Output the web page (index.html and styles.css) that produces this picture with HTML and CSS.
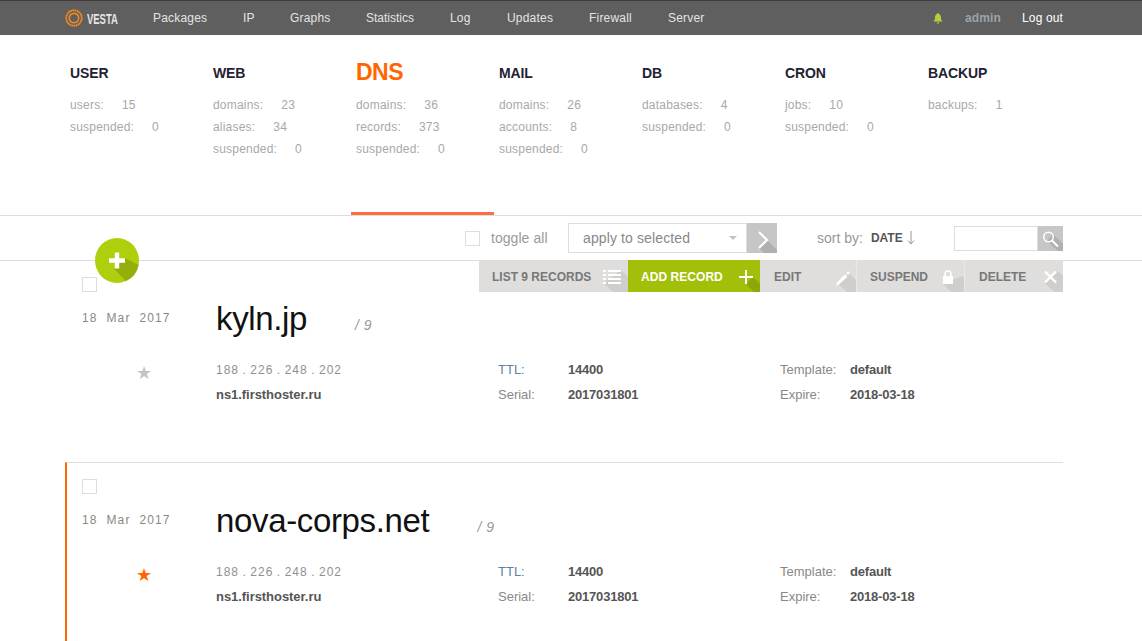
FILE: index.html
```html
<!DOCTYPE html>
<html lang="en">
<head>
<meta charset="utf-8">
<title>Vesta - DNS</title>
<link rel="stylesheet" href="styles.css">
</head>
<body>
<header class="topbar">
  <div class="logo">
    <svg width="18" height="18" viewBox="0 0 20 20"><circle cx="10" cy="10" r="8.600" fill="none" stroke="#f58a1f" stroke-width="2" stroke-dasharray="2 .4"/><circle cx="10" cy="10" r="5.200" fill="none" stroke="#f58a1f" stroke-width="1.800"/></svg>
    <span class="logo-text">VESTA</span>
  </div>
  <nav class="menu">
    <a class="m1">Packages</a><a class="m2">IP</a><a class="m3">Graphs</a><a class="m4">Statistics</a><a class="m5">Log</a><a class="m6">Updates</a><a class="m7">Firewall</a><a class="m8">Server</a>
  </nav>
  <div class="userbox">
    <svg class="bell" width="10" height="11" viewBox="0 0 10 11"><path d="M5 0c.6 0 .9.4.9 1C7.500 1.500 8 3 8 4.500 8 6.800 8.800 7.600 9.600 8.600H.4C1.200 7.600 2 6.800 2 4.500 2 3 2.500 1.500 4.100 1 4.100.4 4.400 0 5 0zM3.700 9.300h2.600C6.200 10.200 5.700 10.700 5 10.700S3.800 10.200 3.700 9.300z" fill="#b5cf3c"/></svg>
    <a class="admin">admin</a>
    <a class="logout">Log out</a>
  </div>
</header>

<section class="tabs">
  <div class="tab"><h3>USER</h3><p><span>users:</span><b>15</b></p><p><span>suspended:</span><b>0</b></p></div>
  <div class="tab"><h3>WEB</h3><p><span>domains:</span><b>23</b></p><p><span>aliases:</span><b>34</b></p><p><span>suspended:</span><b>0</b></p></div>
  <div class="tab active"><h3>DNS</h3><p><span>domains:</span><b>36</b></p><p><span>records:</span><b>373</b></p><p><span>suspended:</span><b>0</b></p></div>
  <div class="tab"><h3>MAIL</h3><p><span>domains:</span><b>26</b></p><p><span>accounts:</span><b>8</b></p><p><span>suspended:</span><b>0</b></p></div>
  <div class="tab"><h3>DB</h3><p><span>databases:</span><b>4</b></p><p><span>suspended:</span><b>0</b></p></div>
  <div class="tab"><h3>CRON</h3><p><span>jobs:</span><b>10</b></p><p><span>suspended:</span><b>0</b></p></div>
  <div class="tab"><h3>BACKUP</h3><p><span>backups:</span><b>1</b></p></div>
</section>

<section class="toolbar">
  <a class="fab">
    <svg width="44" height="45" viewBox="0 0 44 45"><ellipse cx="22" cy="22.500" rx="22" ry="22.500" fill="#aecf0c"/><path d="M30 20L43.600 27A22 22 0 0 1 31 43L19 31z" fill="#96ad0a"/><path d="M19.800 14.500h4.400v5.800H30v4.400h-5.800v5.800h-4.400v-5.800H14v-4.400h5.800z" fill="#fff"/></svg>
  </a>
  <label class="check"></label>
  <span class="toggle">toggle all</span>
  <div class="select"><span>apply to selected</span><i class="caret"></i></div>
  <a class="go">
    <svg width="30" height="30" viewBox="0 0 30 30"><path d="M20 17l10 10v3H17l-5-5z" fill="#b0b0b0"/><path d="M12 9l8 8-8 8" fill="none" stroke="#fff" stroke-width="2.200"/></svg>
  </a>
  <span class="sort">sort by:</span>
  <b class="sort-val">DATE</b>
  <svg class="sort-arrow" width="8" height="14" viewBox="0 0 8 14"><path d="M4 0v13M1 9.500L4 13l3-3.500" fill="none" stroke="#999" stroke-width="1"/></svg>
  <div class="search"></div>
  <a class="search-btn">
    <svg width="25" height="25" viewBox="0 0 25 25"><path d="M15 8l10 10v7h-5L9 15z" fill="#b0b0b0"/><circle cx="10.500" cy="11" r="4.800" fill="none" stroke="#fff" stroke-width="1.500"/><path d="M14 14.500l6 6" stroke="#fff" stroke-width="2"/></svg>
  </a>
</section>

<main class="rows">
  <article class="row">
    <div class="actions">
      <a class="act a-list"><span>LIST 9 RECORDS</span>
        <svg width="32" height="32" viewBox="0 0 32 32"><path d="M25 10l7 7v15H17l-10-9z" fill="#cfcecd"/><path d="M7 10h3v2H7zM12 10h13v2H12zM7 14h3v2H7zM12 14h13v2H12zM7 18h3v2H7zM12 18h13v2H12zM7 22h3v2H7zM12 22h13v2H12z" fill="#fff"/></svg></a>
      <a class="act a-add"><span>ADD RECORD</span>
        <svg width="34" height="32" viewBox="0 0 34 32"><path d="M27 17l7 7v8h-6l-8-8z" fill="#8ba70a"/><path d="M20 10v14M13 17h14" stroke="#fff" stroke-width="2"/></svg></a>
      <a class="act a-edit"><span>EDIT</span>
        <svg width="30" height="32" viewBox="0 0 30 32"><path d="M21 11l9 9v12H21l-10-9z" fill="#cfcecd"/><path d="M11 22.500l8-8.500 2.500 2.500-8.500 8-3 .5zM20 13l2-2 2 2-2 2z" fill="#fff"/></svg></a>
      <a class="act a-susp"><span>SUSPEND</span>
        <svg width="30" height="32" viewBox="0 0 30 32"><path d="M28 16l2 2v14H17l-8-8z" fill="#cfcecd"/><path d="M9 16h10v8H9z" fill="#fff"/><path d="M11 17v-3a3 3 0 0 1 6 0v3" fill="none" stroke="#fff" stroke-width="1.600"/></svg></a>
      <a class="act a-del"><span>DELETE</span>
        <svg width="28" height="32" viewBox="0 0 28 32"><path d="M23 11l5 5v16h-8l-11-9z" fill="#cfcecd"/><path d="M10 11.500l11 11M21 11.500l-11 11" stroke="#fff" stroke-width="2.400"/></svg></a>
    </div>
    <div class="row-side">
      <label class="check"></label>
      <time>18 &nbsp;Mar &nbsp;2017</time>
      <span class="star">★</span>
    </div>
    <div class="row-main">
      <h2><span>kyln.jp</span><em class="c1">/ 9</em></h2>
      <div class="grid">
        <div class="info"><p class="ip">188 . 226 . 248 . 202</p><p class="ns">ns1.firsthoster.ru</p></div>
        <div class="kv"><p><span class="ttl">TTL:</span><b>14400</b></p><p><span>Serial:</span><b>2017031801</b></p></div>
        <div class="kv"><p><span>Template:</span><b>default</b></p><p><span>Expire:</span><b>2018-03-18</b></p></div>
      </div>
    </div>
  </article>

  <article class="row selected">
    <div class="row-side">
      <label class="check"></label>
      <time>18 &nbsp;Mar &nbsp;2017</time>
      <span class="star">★</span>
    </div>
    <div class="row-main">
      <h2><span>nova-corps.net</span><em class="c2">/ 9</em></h2>
      <div class="grid">
        <div class="info"><p class="ip">188 . 226 . 248 . 202</p><p class="ns">ns1.firsthoster.ru</p></div>
        <div class="kv"><p><span class="ttl">TTL:</span><b>14400</b></p><p><span>Serial:</span><b>2017031801</b></p></div>
        <div class="kv"><p><span>Template:</span><b>default</b></p><p><span>Expire:</span><b>2018-03-18</b></p></div>
      </div>
    </div>
  </article>
</main>
</body>
</html>
```
FILE: styles.css
```css
* { box-sizing: border-box; }
html, body { margin: 0; padding: 0; height: 641px; overflow: hidden; background: #fff; }
body { font-family: "Liberation Sans", Arial, sans-serif; color: #555; }
h2, h3, p { margin: 0; font-weight: normal; }
a { display: block; }

.topbar {
  height: 35px;
  background: #5f5f5f;
  border-top: 1px solid #3f3f3f;
  display: flex;
  align-items: center;
  padding-left: 65px;
  font-size: 12px;
}
.logo { display: flex; align-items: center; width: 88px; gap: 4px; }
.logo-text {
  font-size: 15px;
  font-weight: bold;
  color: #e6e6e6;
  transform: scaleX(.63);
  transform-origin: left center;
}
.menu { display: flex; color: #e4e4e4; letter-spacing: .2px; }
.m1 { width: 90px; }
.m2 { width: 47px; }
.m3 { width: 76px; }
.m4 { width: 84px; letter-spacing: 0; }
.m5 { width: 57px; }
.m6 { width: 82px; }
.m7 { width: 79px; }
.userbox { margin-left: auto; display: flex; align-items: center; width: 139px; margin-right: 70px; }
.bell { margin-right: 22px; }
.admin { font-weight: bold; color: #9aa3a8; width: 57px; letter-spacing: .1px; }
.logout { color: #fff; letter-spacing: .15px; white-space: nowrap; }

.tabs {
  height: 180px;
  padding-left: 65px;
  display: flex;
}
.tab { width: 143px; padding: 30px 0 0 5px; position: relative; font-size: 12px; color: #a8a8a8; }
.tab h3 { font-size: 14px; font-weight: bold; color: #1f2233; height: 16px; line-height: 16px; margin-bottom: 16px; letter-spacing: -.1px; }
.tab p { height: 22px; line-height: 17px; display: flex; letter-spacing: .2px; }
.tab p b { font-weight: normal; margin-left: 18px; }
.tab.active::after { content: ""; position: absolute; left: 0; right: 0; bottom: 0; height: 3px; background: #ff6e42; }
.tab.active h3 { color: #ff6600; font-size: 23px; line-height: 14px; letter-spacing: -.5px; }

.toolbar {
  height: 46px;
  border-top: 1px solid #ddd;
  border-bottom: 1px solid #ddd;
  display: flex;
  align-items: center;
  position: relative;
  padding-left: 465px;
}
.check { display: block; width: 15px; height: 15px; border: 1px solid #ddd; background: #fff; flex: none; }
.fab { position: absolute; left: 95px; top: 22px; width: 44px; height: 45px; z-index: 5; }
.fab svg { display: block; }
.toggle { margin-left: 11px; font-size: 14px; color: #999; width: 77px; letter-spacing: .05px; }
.select {
  width: 179px;
  height: 30px;
  border: 1px solid #ddd;
  display: flex;
  align-items: center;
  justify-content: space-between;
  padding: 0 9px 0 14px;
  font-size: 14px;
  color: #888;
  letter-spacing: .12px;
}
.caret { width: 0; height: 0; border: 4px solid transparent; border-top: 4px solid #c4c4c4; border-bottom: 0; }
.go { width: 30px; height: 30px; background: #c6c6c6; overflow: hidden; }
.go svg, .search-btn svg { display: block; }
.sort { margin-left: 40px; font-size: 14px; color: #999; }
.sort-val { margin-left: 8px; font-size: 12px; color: #555; }
.sort-arrow { margin-left: 4px; }
.search { margin-left: 39px; width: 84px; height: 25px; border: 1px solid #ddd; }
.search-btn { width: 25px; height: 25px; background: #c6c6c6; overflow: hidden; }

.rows { padding-left: 65px; width: 1063px; }
.row {
  position: relative;
  height: 201px;
  padding: 16px 0 0 17px;
  display: flex;
}
.row.selected {
  border-top: 1px solid #ddd;
  border-left: 2px solid #ff6600;
  padding-left: 15px;
  height: 190px;
}
.row-side { width: 134px; display: flex; flex-direction: column; position: relative; }
.row-side time { margin-top: 18px; font-size: 12px; letter-spacing: 1.12px; color: #8a8a80; line-height: 16px; white-space: nowrap; }
.star { font-size: 18px; line-height: 20px; color: #c4c4c4; margin: 37px 0 0 54px; }
.selected .star { color: #ff6600; }
.row-main { flex: 1; }
.row-main h2 { font-size: 33px; line-height: 40px; color: #111; margin-top: 22px; display: flex; letter-spacing: -.35px; }
.row-main h2 em { font-size: 14px; color: #999; line-height: 14px; align-self: flex-end; letter-spacing: .5px; padding-bottom: 7px; }
.c1 { margin-left: 48px; }
.c2 { margin-left: 48px; }
.grid { display: grid; grid-template-columns: 282px 282px 1fr; margin-top: 23px; font-size: 13px; }
.info .ip { font-size: 12px; letter-spacing: 1px; word-spacing: -.85px; color: #909090; height: 25px; line-height: 16px; }
.info .ns { font-weight: bold; color: #555; line-height: 16px; letter-spacing: -.05px; }
.kv p { display: flex; height: 25px; line-height: 16px; }
.kv span { width: 70px; color: #888; }
.kv .ttl { color: #5f7f9f; }
.kv b { color: #555; letter-spacing: -.2px; }

.actions {
  position: absolute;
  top: -1px;
  right: 0;
  height: 32px;
  display: flex;
  font-size: 12px;
  font-weight: bold;
  color: #777;
  z-index: 3;
}
.act { display: flex; align-items: center; height: 32px; background: #dfdedd; overflow: hidden; position: relative; padding-left: 13px; padding-top: 2px; }
.act svg { display: block; position: absolute; right: 0; top: 0; }
.a-list { width: 149px; }
.a-add { width: 132px; background: #a3bf09; color: #fff; letter-spacing: .05px; }
.a-edit { width: 97px; padding-left: 14px; border-right: 1px solid #e9e8e7; }
.a-susp { width: 108px; border-right: 1px solid #e9e8e7; }
.a-del { width: 98px; padding-left: 14px; }
```
